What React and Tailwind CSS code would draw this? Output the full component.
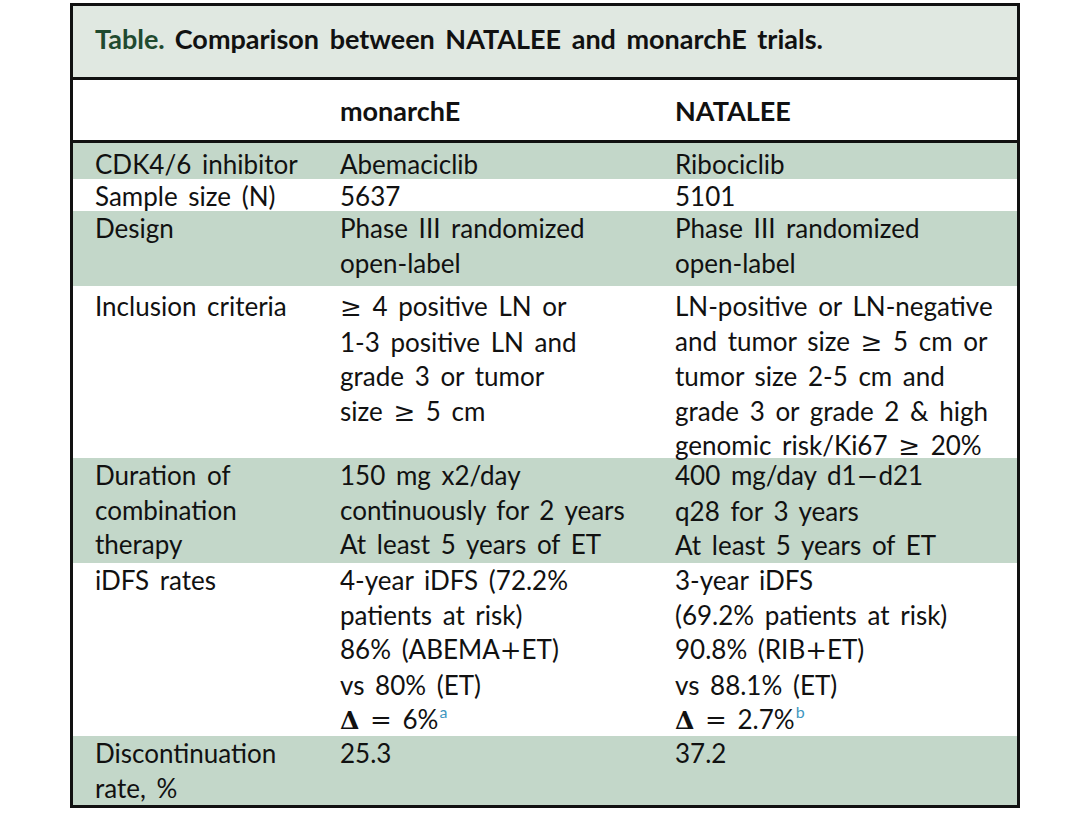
import React from "react";

const M = ({ children }) => (
  <span style={{ fontFamily: '"DejaVu Serif", "Liberation Serif", serif' }} className="font-normal">{children}</span>
);
const Ge = () => <M>≥</M>;
const D = () => (
  <span style={{ fontFamily: '"DejaVu Serif", "Liberation Serif", serif' }} className="font-bold text-[25px]">Δ</span>
);
const Sup = ({ children }) => (
  <span className="text-[16px] text-[#3f97bf] relative -top-[11px] ml-[1px]">{children}</span>
);

const rows = [
  { bg: true, h: "h-[36px] pt-[4px]", c1: ["CDK4/6 inhibitor"], c2: ["Abemaciclib"], c3: ["Ribociclib"] },
  { bg: false, h: "h-[32px]", c1: ["Sample size (N)"], c2: ["5637"], c3: ["5101"] },
  { bg: true, h: "h-[75px]", c1: ["Design"], c2: ["Phase III randomized", "open-label"], c3: ["Phase III randomized", "open-label"] },
  {
    bg: false,
    h: "h-[172px] pt-[3px]",
    c1: ["Inclusion criteria"],
    c2: [<><Ge /> 4 positive LN or</>, "1-3 positive LN and", "grade 3 or tumor", <>size <Ge /> 5 cm</>],
    c3: [
      "LN-positive or LN-negative",
      <>and tumor size <Ge /> 5 cm or</>,
      "tumor size 2-5 cm and",
      "grade 3 or grade 2 & high",
      <>genomic risk/Ki67 <Ge /> 20%</>,
    ],
  },
  {
    bg: true,
    h: "h-[105px]",
    c1: ["Duration of", "combination", "therapy"],
    c2: ["150 mg x2/day", "continuously for 2 years", "At least 5 years of ET"],
    c3: [<>400 mg/day d1<M>−</M>d21</>, "q28 for 3 years", "At least 5 years of ET"],
  },
  {
    bg: false,
    h: "h-[173px]",
    c1: ["iDFS rates"],
    c2: [
      "4-year iDFS (72.2%",
      "patients at risk)",
      <>86% (ABEMA<M>+</M>ET)</>,
      "vs 80% (ET)",
      <><D /> <M>=</M> 6%<Sup>a</Sup></>,
    ],
    c3: [
      "3-year iDFS",
      "(69.2% patients at risk)",
      <>90.8% (RIB<M>+</M>ET)</>,
      "vs 88.1% (ET)",
      <><D /> <M>=</M> 2.7%<Sup>b</Sup></>,
    ],
  },
  { bg: true, h: "h-[69px]", c1: ["Discontinuation", "rate, %"], c2: ["25.3"], c3: ["37.2"] },
];

const Cell = ({ lines }) => (
  <div className="pl-[22px]">
    {lines.map((l, i) => (
      <div key={i} className="whitespace-nowrap">{l}</div>
    ))}
  </div>
);

export default function App() {
  return (
    <div
      className="w-[1080px] h-[825px] bg-white pt-[3px] pl-[70px] text-[#111111]"
      style={{ fontFamily: 'Lato, "Noto Sans", sans-serif' }}
    >
      <div className="w-[950px] border-[3px] border-[#111111]">
        <div className="h-[74px] bg-[#e0e8e1] border-b-[3px] border-[#111111] flex items-center pl-[22px] pb-[4px] text-[27px] font-bold [word-spacing:4px]">
          <span className="text-[#1f4a2f]">Table.</span>
          <span className="ml-[10px]">Comparison between NATALEE and monarchE trials.</span>
        </div>
        <div className="h-[63px] border-b-[3px] border-[#111111] grid grid-cols-[245px_335px_1fr] items-center text-[27px] font-bold pt-[2px]">
          <div />
          <div className="pl-[22px]">monarchE</div>
          <div className="pl-[22px]">NATALEE</div>
        </div>
        <div className="text-[26px] leading-[34.6px] [word-spacing:4px]">
          {rows.map((r, i) => (
            <div
              key={i}
              className={`grid grid-cols-[245px_335px_1fr] ${r.h} ${r.bg ? "bg-[#c3d7c9]" : "bg-white"}`}
            >
              <Cell lines={r.c1} />
              <Cell lines={r.c2} />
              <Cell lines={r.c3} />
            </div>
          ))}
        </div>
      </div>
    </div>
  );
}
